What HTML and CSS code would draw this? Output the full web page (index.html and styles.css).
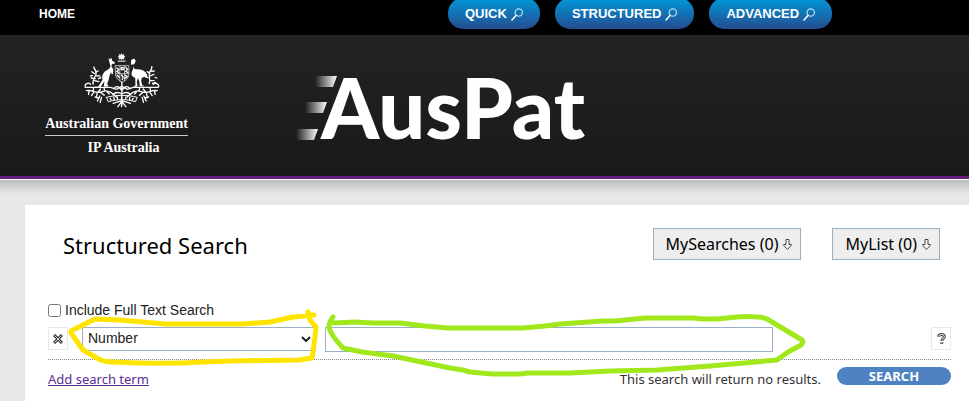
FILE: index.html
```html
<!DOCTYPE html>
<html lang="en">
<head>
<meta charset="utf-8">
<title>AusPat - Structured Search</title>
<link rel="stylesheet" href="styles.css">
</head>
<body>
<svg class="defs" width="0" height="0" aria-hidden="true">
  <symbol id="lens" viewBox="0 0 12 13">
    <circle cx="7.8" cy="4.5" r="3.7" fill="none" stroke="#b5dcf2" stroke-width="1.2"/>
    <path d="M5 7.6 L1 12" fill="none" stroke="#fff" stroke-width="1.5" stroke-linecap="round"/>
  </symbol>
  <symbol id="down" viewBox="0 0 9 11">
    <path d="M3 .5h3v5h2.3v1L4.5 10.3.7 6.5v-1H3z" fill="#f7f7f7" stroke="#444" stroke-width="1"/>
  </symbol>
</svg>
<nav class="topbar">
  <a class="home" href="#">HOME</a>
  <div class="modes">
    <a class="mode" href="#">QUICK<svg class="lens"><use href="#lens"/></svg></a>
    <a class="mode" href="#">STRUCTURED<svg class="lens"><use href="#lens"/></svg></a>
    <a class="mode" href="#">ADVANCED<svg class="lens"><use href="#lens"/></svg></a>
  </div>
</nav>
<header class="banner">
  <div class="gov">
    <svg class="crest" viewBox="160 38 230 168" aria-hidden="true">
      <g fill="#fff">
        <path d="M275 41l3 6 6-3-2 6 5 2-5 3 2 6-6-3-3 5-3-5-6 3 2-6-5-3 5-2-2-6 6 3z"/>
        <path d="M236 57l5 3 4-5 2 9 8 5-1 4-8 1-1 10c5 2 6 7 5 11l-1 10-4-1-1-7-5 12-2 11-5 13 4 8-12 1-2-3 2-13-8 11-5 8h-14l-2-3h10l13-21c-3-12 2-21 10-27 8-4 13-7 14-15l-2-5z"/>
        <path d="M304 62l7-4c5 0 7 4 6 9l-5 10c-2 6 0 11 6 13 10-2 23 1 29 9 5 6 6 11 5 16l-7-3-9 3-2 10 3 12 7 4h-14l-2-16-4-9-3 12 2 12-3 2h-10l7-4-1-23c-7-2-11-6-11-12 0-7 6-13 6-22l2-6-10 1z"/>
        <path d="M264 64h23v3h-23z"/>
      </g>
      <g fill="none" stroke="#fff" stroke-width="4" stroke-linecap="round">
        <path d="M257 79h40v25c0 12-10 20-20 25-10-5-20-13-20-25zM258 103h38M270 80v44M284 80v44" stroke-width="2"/>
        <path d="M261 86l6 5-6 5 6 4M274 85h6v6h-6zM288 84l5 6-5 6 6 4M262 108l6 6M275 107l5 7-3 7M287 108l5 3-6 6"/>
        <path d="M166 144h76l18 6 16-9 16 9 18-6h74" stroke-width="4"/>
        <path d="M167 143c-5-10 10-15 15-8M386 143c3-11-11-14-16-8" />
        <path d="M190 134c-5-18 18-26 6-43M196 118l-12-2M198 109l12 1M194 124l13 3M194 103l-8-6M197 98l8-3M195 91l-3-8M188 109l-6 1M206 118l7-3"/>
        <path d="M358 133c8-16-9-25 6-42M354 115l-8-3M360 110l12-5M360 124l13 0M360 102l-8-5M364 96l9-1M365 90l1-8M376 114l5 2M368 132l10-2"/>
        <path d="M170 154c18-5 26 12 50 2 14-6 27 4 40 17M178 155l-2 10M190 155l1-8M191 160l-6 9M202 161l-2 12M205 158l7-9M214 160l9 8M224 155l-1-8M230 155l8 9M196 173l10 3M210 170l-7 15M215 174l-4 15"/>
        <path d="M382 154c-18-5-26 12-50 2-14-6-27 4-40 17M374 155l2 10M362 155l-1-8M361 160l6 9M350 161l2 12M347 158l-7-9M338 160l-9 8M328 155l1-8M322 155l-8 9M356 173l-10 3M342 170l7 15M337 174l4 15"/>
        <path d="M230 174l5 13c28-8 55-8 82 0l5-13c-29-8-62-8-92 0z" stroke-width="3"/>
        <path d="M241 177l3 5M252 174l1 7M263 173v6M275 172v7M288 173v6M300 174l-1 7M310 177l-3 5"/>
        <path d="M276 128v68M276 153c-11-16-18-12-25-5M276 153c11-16 18-12 25-5M276 164c-9-6-19-6-27 2M276 164c9-6 19-6 27 2M276 184l-26 8M276 184l26 8M276 186l-12 16M276 186l12 16M276 190l-1 12"/>
      </g>
    </svg>
    <span class="gov-name">Australian Government</span>
    <span class="gov-dept">IP Australia</span>
  </div>
  <div class="logo">
    <svg class="speed" viewBox="0 0 42 66" aria-hidden="true">
      <defs><linearGradient id="fade"><stop offset="0" stop-color="#fff" stop-opacity="0"/><stop offset="1" stop-color="#fff"/></linearGradient></defs>
      <g fill="url(#fade)"><path d="M19 1h22l-4 11H19z"/><path d="M9 27h22l-4 11H9z"/><path d="M0 54h22l-4 11H0z"/></g>
    </svg>
    <span class="logo-text">AusPat</span>
  </div>
</header>
<main class="page">
  <section class="panel">
    <div class="heading">
      <h1>Structured Search</h1>
      <div class="lists">
        <button class="list" type="button">MySearches (0)<svg class="down"><use href="#down"/></svg></button>
        <button class="list" type="button">MyList (0)<svg class="down"><use href="#down"/></svg></button>
      </div>
    </div>
    <form class="search">
      <label class="full"><input type="checkbox">Include Full Text Search</label>
      <div class="term">
        <button class="small" type="button" aria-label="Remove term">
          <svg width="10" height="10" viewBox="0 0 10 10"><path d="M1 1l8 8M9 1L1 9" stroke="#333" stroke-width="3"/><path d="M1.5 1.5l7 7M8.5 1.5l-7 7" stroke="#ddd" stroke-width="1"/></svg>
        </button>
        <div class="select-wrap">
          <select class="field" aria-label="Search field"><option>Number</option></select>
          <svg class="chevron" viewBox="0 0 10 6"><path d="M1 1l4 4 4-4" fill="none" stroke="#222" stroke-width="2"/></svg>
        </div>
        <input class="value" type="text" aria-label="Search value">
        <button class="small help" type="button" aria-label="Help">
          <svg width="9" height="12" viewBox="0 0 9 12" fill="none"><path d="M1.8 3.8c0-3 5.6-3 5.6-.2C7.4 5.5 4.8 5.2 4.8 8M4.8 9.3v1.7" stroke="#444" stroke-width="3"/><path d="M1.8 3.4c0-2.5 5.6-2.5 5.6.2C7.4 5.500 4.8 5.2 4.8 7.500M4.800 9.600v1" stroke="#fff" stroke-width="1"/></svg>
        </button>
      </div>
      <div class="actions">
        <a class="add" href="#">Add search term</a>
        <span class="status">This search will return no results.</span>
        <button class="submit" type="submit">SEARCH</button>
      </div>
    </form>
  </section>
</main>
<svg class="marks" width="820" height="390" viewBox="0 0 820 390" aria-hidden="true">
  <path stroke="#ffe400" d="M308 312L310 320 316 327 315 337 312 358 299 360 230 361 203 362Q170 364 140 363L112 362Q103 362 97 358L83 350 71 333V331L95 319 120 320 166 324H243L270 322 293 317 314 315"/>
  <path stroke="#a0e81c" d="M333 317Q329 322 329 327 330 334 343 348L362 352 393 356 450 368 463 370 470 372 492 374H520L528 373H570L610 371 657 370 710 366 777 360 788 352 801 345Q804 342 802 340L772 322Q765 317 758 317 747 316 737 317L717 319H703L693 318H645L615 321H603L560 324 545 326 523 328H448L425 326 400 323H373L355 322 334 323"/>
</svg>
</body>
</html>
```
FILE: styles.css
```css
* { box-sizing: border-box; }
body {
  margin: 0;
  min-height: 100vh;
  display: flex;
  flex-direction: column;
  position: relative;
  background: #e8e8e8;
  color: #000;
  font: 14px/20px "Liberation Sans", Arial, sans-serif;
}
button, select, input { font: inherit; color: inherit; margin: 0; }
.defs { display: none; }

.topbar {
  display: flex;
  height: 35px;
  padding-left: 39px;
  background: #000;
  font-size: 12px;
  font-weight: bold;
}
.topbar a { color: #fff; text-decoration: none; }
.home { width: 409px; line-height: 28px; }
.modes { display: flex; gap: 15px; font-size: 13px; }
.mode {
  display: flex;
  align-items: center;
  gap: 4px;
  height: 31px;
  margin-top: -2px;
  padding: 0 17px;
  border-radius: 15px;
  background: linear-gradient(#0098d8, #254c90);
}
.lens { width: 12px; height: 13px; margin-top: 2px; }

.banner {
  display: flex;
  height: 144px;
  padding-left: 45px;
  background: linear-gradient(#232323, #191919);
  border-bottom: 3px solid #68207f;
}
.gov {
  display: flex;
  flex-direction: column;
  align-items: center;
  width: 143px;
  padding-top: 17px;
  color: #fff;
  font-family: "Liberation Serif", "Times New Roman", serif;
  font-size: 14px;
  font-weight: bold;
  white-space: nowrap;
}
.crest { width: 77px; height: 56px; margin-left: 10px; }
.gov-name { padding: 6px 0 1px; }
.gov-dept { width: 100%; padding-left: 14px; border-top: 1px solid #ccc; text-align: center; line-height: 23px; }
.logo { display: flex; align-items: flex-start; margin-left: 108px; padding-top: 40px; }
.speed { width: 42px; height: 66px; }
.logo-text {
  margin-left: -17px;
  color: #fff;
  font: 900 83px/64px Lato, "Open Sans", sans-serif;
}

.page {
  flex: 1;
  display: flex;
  padding: 25px 0 0 25px;
  border-top: 1px solid #fff;
  background: linear-gradient(#bdbdbd, #e8e8e8 14px);
}
.panel { flex: 1; padding: 23px 18px 0 23px; background: #fff; }
.heading { display: flex; justify-content: space-between; padding: 0 11px 0 15px; }
h1 { margin: 0; font: 22px/34px "Noto Sans", sans-serif; }
.lists { display: flex; gap: 31px; }
.list {
  display: flex;
  align-items: center;
  gap: 5px;
  height: 32px;
  padding: 0 8px 0 12px;
  border: 1px solid #9aaec6;
  background: #eee;
  font: 16px/30px "Noto Sans", sans-serif;
  white-space: nowrap;
}
.down { width: 9px; height: 11px; }

.search { padding-top: 38px; }
.full { display: flex; align-items: center; gap: 4px; height: 20px; color: #222; }
.full input { width: 13px; height: 13px; margin: 0; }
.term {
  display: flex;
  padding: 7px 0;
  border-bottom: 1px dotted #888;
}
.small {
  display: grid;
  place-items: center;
  width: 20px;
  height: 23px;
  padding: 0;
  border: 1px solid #e8e8e8;
  background: #fff;
}
.help { margin-left: auto; }
.select-wrap { position: relative; width: 234px; margin: 0 9px 0 14px; }
.field {
  appearance: none;
  width: 100%;
  height: 24px;
  padding: 0 5px 2px;
  border: 1px solid #9aaec6;
  border-radius: 0;
  background: #fff;
  color: #222;
}
.chevron { position: absolute; right: 5px; top: 9px; width: 10px; height: 6px; pointer-events: none; }
.value { width: 448px; height: 25px; border: 1px solid #9aaec6; background: #fff; }
.actions {
  display: flex;
  align-items: flex-start;
  padding-top: 7px;
  font: 13px/24px "Noto Sans", sans-serif;
}
.add { color: #5c2d91; }
.status { margin: 0 16px 0 auto; color: #333; }
.submit {
  width: 114px;
  height: 18px;
  padding: 0;
  border: 0;
  border-radius: 9px;
  background: #4e82c3;
  color: #fff;
  font-weight: bold;
  line-height: 18px;
}
.marks { position: absolute; left: 0; top: 0; pointer-events: none; }
.marks path { fill: none; stroke-width: 5; stroke-linecap: round; stroke-linejoin: round; }
```
